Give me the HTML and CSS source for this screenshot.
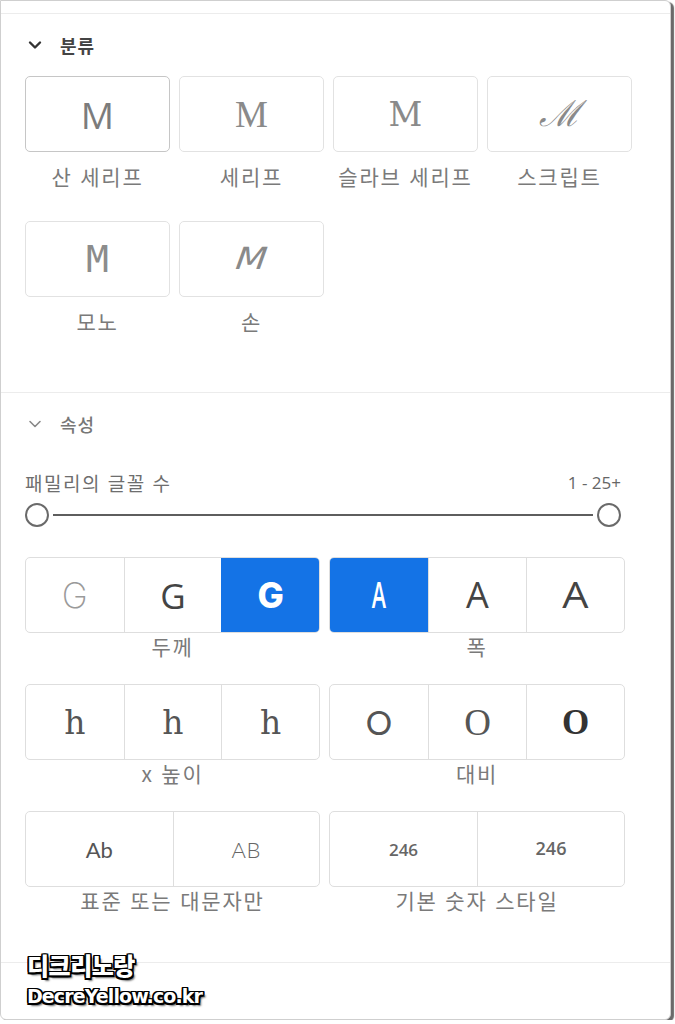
FILE: index.html
```html
<!DOCTYPE html>
<html lang="ko">
<head>
<meta charset="utf-8">
<title>필터</title>
<link rel="stylesheet" href="styles.css">
</head>
<body>
<div class="panel">
  <section class="section cat">
    <div class="head">
      <svg class="chev" viewBox="0 0 16 16" width="16" height="16"><path d="M3 5.5 L8 10.5 L13 5.5" fill="none" stroke="#333" stroke-width="2.4" stroke-linecap="round" stroke-linejoin="round"/></svg>
      <span class="head-t dark">분류</span>
    </div>
    <div class="cards">
      <div class="item"><div class="card hover"><span class="m sans">M</span></div><div class="lab">산 세리프</div></div>
      <div class="item"><div class="card"><span class="m serif">M</span></div><div class="lab">세리프</div></div>
      <div class="item"><div class="card"><span class="m slab">M</span></div><div class="lab">슬라브 세리프</div></div>
      <div class="item"><div class="card"><span class="m script">ℳ</span></div><div class="lab">스크립트</div></div>
      <div class="item"><div class="card"><span class="m mono">M</span></div><div class="lab">모노</div></div>
      <div class="item"><div class="card"><span class="m hand">M</span></div><div class="lab">손</div></div>
    </div>
  </section>

  <section class="section props">
    <div class="head">
      <svg class="chev" viewBox="0 0 16 16" width="16" height="16"><path d="M3 5.5 L8 10.5 L13 5.5" fill="none" stroke="#888" stroke-width="1.6" stroke-linecap="round" stroke-linejoin="round"/></svg>
      <span class="head-t light">속성</span>
    </div>
    <div class="range-row">
      <span class="range-l">패밀리의 글꼴 수</span>
      <span class="range-v">1 - 25+</span>
    </div>
    <div class="slider">
      <span class="knob"></span><span class="track"></span><span class="knob"></span>
    </div>

    <div class="groups">
      <div class="grp">
        <div class="seg3 seg">
          <div class="s"><span class="g g1">G</span></div>
          <div class="s"><span class="g g2">G</span></div>
          <div class="s on"><span class="g g3">G</span></div>
        </div>
        <div class="glab">두께</div>
      </div>
      <div class="grp">
        <div class="seg3 seg">
          <div class="s on"><span class="a a1">A</span></div>
          <div class="s"><span class="a a2">A</span></div>
          <div class="s"><span class="a a3">A</span></div>
        </div>
        <div class="glab">폭</div>
      </div>

      <div class="grp">
        <div class="seg3 seg">
          <div class="s"><span class="h">h</span></div>
          <div class="s"><span class="h">h</span></div>
          <div class="s"><span class="h">h</span></div>
        </div>
        <div class="glab">x 높이</div>
      </div>
      <div class="grp">
        <div class="seg3 seg">
          <div class="s"><span class="o o1">O</span></div>
          <div class="s"><span class="o o2">O</span></div>
          <div class="s"><span class="o o3">O</span></div>
        </div>
        <div class="glab">대비</div>
      </div>

      <div class="grp">
        <div class="seg2 seg">
          <div class="s"><span class="ab">Ab</span></div>
          <div class="s"><span class="ab sc">AB</span></div>
        </div>
        <div class="glab">표준 또는 대문자만</div>
      </div>
      <div class="grp">
        <div class="seg2 seg">
          <div class="s"><span class="num">246</span></div>
          <div class="s"><span class="num old">246</span></div>
        </div>
        <div class="glab">기본 숫자 스타일</div>
      </div>
    </div>
  </section>
  <section class="section tail"></section>

  <div class="wm">
    <div class="wm1">디크리노랑</div>
    <div class="wm2">DecreYellow.co.kr</div>
  </div>
</div>
</body>
</html>
```

FILE: styles.css
```css
* { box-sizing: border-box; }
html, body { margin: 0; padding: 0; background: #ffffff; }
body { font-family: "Noto Sans CJK KR", "Noto Sans", sans-serif; }

.panel {
  position: relative;
  width: 671px;
  height: 1020px;
  border: 1px solid #cfcfcf;
  border-radius: 0 6px 6px 6px;
  box-shadow: 3px 2px 1px #6a6a6a;
  background: #fff;
  padding-top: 12px;
  overflow: hidden;
}

.section {
  border-top: 1px solid #ececec;
  padding: 19px 0 0 24px;
}
.cat { height: 379px; }
.props { height: 570px; }

.head { display: flex; align-items: center; height: 24px; gap: 17px; padding-left: 2px; }
.head-t { font-size: 18px; line-height: 24px; letter-spacing: 1px; }
.head-t.dark { color: #444; font-weight: 700; }
.head-t.light { color: #777; font-weight: 500; padding-left: 0; }

.cards {
  margin-top: 19px;
  display: grid;
  grid-template-columns: repeat(4, 145px);
  column-gap: 9px;
  row-gap: 31px;
}
.item { display: flex; flex-direction: column; align-items: center; }
.card {
  width: 100%;
  height: 76px;
  border: 1.5px solid #e2e2e2;
  border-radius: 5px;
  display: flex; align-items: center; justify-content: center;
}
.card.hover { border-color: #c6c6c6; }
.lab { margin-top: 10px; font-size: 21px; line-height: 28px; color: #7a7a7a; letter-spacing: 1.8px; font-weight: 400; }

.m { color: #7e7e7e; line-height: 1; display: inline-block; }
.sans { font-family: "Open Sans", sans-serif; font-size: 37px; font-weight: 500; color: #7c7c7c; }
.serif { font-family: "Liberation Serif", serif; font-size: 37px; color: #8a8a8a; }
.slab { font-family: "DejaVu Serif", serif; font-size: 33px; color: #8a8a8a; }
.script { font-family: "DejaVu Serif", serif; font-size: 36px; font-style: italic; color: #8a8a8a; }
.mono { font-family: "DejaVu Sans Mono", monospace; font-size: 38px; color: #8c8c8c; }
.hand { font-family: "DejaVu Sans", sans-serif; font-size: 36px; font-style: italic; color: #8a8a8a; transform: scaleY(0.85) skewX(-6deg); font-weight: 300; }

.range-row {
  margin-top: 34px;
  width: 596px;
  display: flex; justify-content: space-between; align-items: center;
  height: 24px;
}
.range-l { font-size: 19px; color: #6e6e6e; letter-spacing: 1.5px; }
.range-v { font-family: "Open Sans", sans-serif; font-size: 17px; color: #666; }

.slider {
  margin-top: 9px;
  width: 596px; height: 24px;
  display: flex; align-items: center;
}
.knob {
  width: 24px; height: 24px; border-radius: 50%;
  border: 2.5px solid #6a6a6a; background: #fff; flex: none;
}
.track { flex: 1; height: 2px; background: #5e5e5e; margin: 0 4px; }

.groups {
  margin-top: 30px;
  display: grid;
  grid-template-columns: 295px 296px;
  column-gap: 9px;
  row-gap: 25px;
}
.grp { display: flex; flex-direction: column; align-items: center; }
.seg {
  width: 100%; height: 76px;
  border: 1.5px solid #dedede;
  border-radius: 5px;
  display: grid;
  overflow: hidden;
}
.seg3 { grid-template-columns: 1fr 1fr 1fr; }
.seg2 { grid-template-columns: 1fr 1fr; }
.s {
  display: flex; align-items: center; justify-content: center;
  border-left: 1.5px solid #dedede;
}
.s:first-child { border-left: none; }
.s.on { background: #1473e6; border-left-color: #1473e6; }
.seg .s.on + .s { border-left-color: #dedede; }

.glab { margin-top: 0; font-size: 21px; line-height: 26px; color: #7a7a7a; letter-spacing: 1.8px; }

.g { font-family: "Open Sans", sans-serif; font-size: 35px; line-height: 1; }
.g1 { font-family: "Inter", sans-serif; font-weight: 200; color: #9a9a9a; }
.g2 { font-weight: 400; color: #444; }
.g3 { font-family: "Inter", sans-serif; font-weight: 800; color: #fff; }

.a { font-family: "Open Sans", sans-serif; font-size: 36px; line-height: 1; color: #444; display: inline-block; }
.a1 { color: #fff; transform: scaleX(0.6); font-weight: 600; }
.a2 { font-weight: 400; }
.a3 { transform: scaleX(1.15); }

.h { font-family: "DejaVu Serif", serif; font-size: 33px; color: #555; line-height: 1; }

.o { line-height: 1; color: #555; display: inline-block; }
.o1 { font-family: "Lato", sans-serif; font-size: 33px; font-weight: 400; }
.o2 { font-family: "Liberation Serif", serif; font-size: 37px; }
.o3 { font-family: "Liberation Serif", serif; font-size: 35px; font-weight: 700; color: #333; }

.ab { font-family: "Lato", sans-serif; font-size: 22px; color: #555; }
.ab.sc { font-family: "Lato", sans-serif; font-weight: 300; color: #666; letter-spacing: 0.5px; }
.num { font-family: "Open Sans", sans-serif; font-size: 17px; font-weight: 600; color: #666; }
.num.old { font-size: 18px; transform: translateY(-1px); }

.tail { height: 60px; }

.wm {
  position: absolute;
  left: 26px;
  top: 947px;
  font-family: "Noto Sans CJK KR", sans-serif;
  color: #fff;
  font-weight: 900;
  text-shadow:
    -1.5px -1.5px 0 #000, 1.5px -1.5px 0 #000, -1.5px 1.5px 0 #000, 1.5px 1.5px 0 #000,
    0 -1.5px 0 #000, 0 1.5px 0 #000, -1.5px 0 0 #000, 1.5px 0 0 #000,
    2.5px 2.5px 2px rgba(0,0,0,0.6);
}
.wm1 { font-size: 24px; line-height: 34px; letter-spacing: -0.5px; }
.wm2 { font-family: "DejaVu Sans", sans-serif; font-weight: 700; font-size: 19px; line-height: 28px; letter-spacing: -0.9px; }
```
